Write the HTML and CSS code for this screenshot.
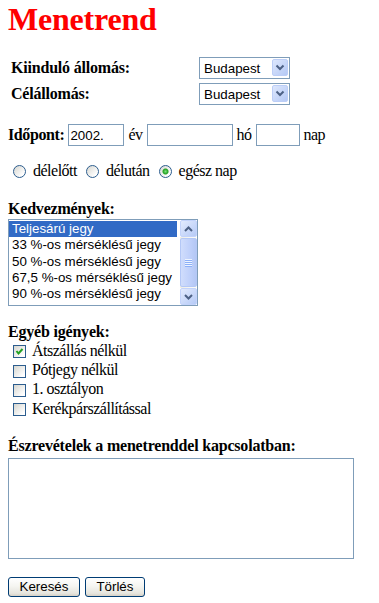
FILE: index.html
```html
<!DOCTYPE html>
<html lang="hu">
<head>
    <meta charset="UTF-8">
    <meta name="viewport" content="width=device-width, initial-scale=1.0">
    <title>Menetrend</title>
    <link rel="stylesheet" href="styles.css">
</head>
<body>
    <h1>Menetrend</h1>
    <form id="timetableForm" class="timetable">
        <div class="stations">
            <label class="field-label" for="from">Kiinduló állomás:</label>
            <span class="combo">
                <select id="from" name="from">
                    <option>Budapest</option>
                </select>
                <span class="combo-button">
                    <svg width="16" height="17" viewBox="0 0 16 17"><polyline points="4.5,6.5 8,10 11.5,6.5" fill="none" stroke="#4d6185" stroke-width="2"/></svg>
                </span>
            </span>

            <label class="field-label" for="to">Célállomás:</label>
            <span class="combo">
                <select id="to" name="to">
                    <option>Budapest</option>
                </select>
                <span class="combo-button">
                    <svg width="16" height="17" viewBox="0 0 16 17"><polyline points="4.5,6.5 8,10 11.5,6.5" fill="none" stroke="#4d6185" stroke-width="2"/></svg>
                </span>
            </span>
        </div>

        <div class="time-row">
            <label class="time-label" for="year">Időpont:</label>
            <input type="text" id="year" name="year" class="text-input year" value="2002.">
            <span class="unit">év</span>
            <input type="text" id="month" name="month" class="text-input month">
            <span class="unit">hó</span>
            <input type="text" id="day" name="day" class="text-input day">
            <span class="unit">nap</span>
        </div>

        <div class="daypart">
            <label class="opt"><input type="radio" name="daypart" value="am">délelőtt</label>
            <label class="opt"><input type="radio" name="daypart" value="pm">délután</label>
            <label class="opt"><input type="radio" name="daypart" value="all" checked>egész nap</label>
        </div>

        <div class="section-title discounts-title">Kedvezmények:</div>
        <div class="listbox">
            <ul class="options">
                <li class="selected">Teljesárú jegy</li>
                <li>33 %-os mérséklésű jegy</li>
                <li>50 %-os mérséklésű jegy</li>
                <li>67,5 %-os mérséklésű jegy</li>
                <li>90 %-os mérséklésű jegy</li>
            </ul>
            <div class="scrollbar">
                <span class="sb-btn">
                    <svg width="9" height="6" viewBox="0 0 9 6"><polyline points="1,5 4.5,1.5 8,5" fill="none" stroke="#4d6185" stroke-width="2"/></svg>
                </span>
                <span class="sb-track">
                    <span class="sb-thumb">
                        <svg width="7" height="8" viewBox="0 0 7 8">
                            <rect x="0" y="0" width="7" height="1" fill="#eef4fe"/>
                            <rect x="0" y="1" width="7" height="1" fill="#8cb0f8"/>
                            <rect x="0" y="2" width="7" height="1" fill="#eef4fe"/>
                            <rect x="0" y="3" width="7" height="1" fill="#8cb0f8"/>
                            <rect x="0" y="4" width="7" height="1" fill="#eef4fe"/>
                            <rect x="0" y="5" width="7" height="1" fill="#8cb0f8"/>
                            <rect x="0" y="6" width="7" height="1" fill="#eef4fe"/>
                            <rect x="0" y="7" width="7" height="1" fill="#8cb0f8"/>
                        </svg>
                    </span>
                </span>
                <span class="sb-btn">
                    <svg width="9" height="6" viewBox="0 0 9 6"><polyline points="1,1 4.5,4.5 8,1" fill="none" stroke="#4d6185" stroke-width="2"/></svg>
                </span>
            </div>
        </div>

        <div class="section-title extras-title">Egyéb igények:</div>
        <div class="extras">
            <label class="check">
                <span class="box"><svg width="9" height="9" viewBox="0 0 9 9"><polyline points="1.5,4 3.5,6.5 7.5,2" fill="none" stroke="#21a121" stroke-width="2"/></svg></span>
                Átszállás nélkül
            </label>
            <label class="check"><span class="box"></span>Pótjegy nélkül</label>
            <label class="check"><span class="box"></span>1. osztályon</label>
            <label class="check"><span class="box"></span>Kerékpárszállítással</label>
        </div>

        <label class="section-title notes-title" for="notes">Észrevételek a menetrenddel kapcsolatban:</label>
        <textarea id="notes" name="notes" class="notes"></textarea>

        <div class="actions">
            <button type="submit" class="btn">Keresés</button>
            <button type="reset" class="btn">Törlés</button>
        </div>
    </form>
</body>
</html>
```

FILE: styles.css
```css
body {
    font-family: "Liberation Serif", "Times New Roman", serif;
    font-size: 16px;
    color: #000;
    background-color: #fff;
    margin: 0;
    padding: 0 8px;
}
h1 {
    margin: 3px 0 0;
    font-size: 32px;
    line-height: 32px;
    color: #ff0000;
    letter-spacing: -0.2px;
}
.timetable {
    margin: 0;
}

/* station pickers */
.stations {
    display: grid;
    grid-template-columns: 188px auto;
    grid-auto-rows: 22px;
    row-gap: 4px;
    align-items: center;
    justify-content: start;
    margin-top: 22px;
    padding-left: 3px;
}
.field-label {
    font-weight: bold;
    letter-spacing: -0.2px;
    line-height: 18px;
}
.combo {
    position: relative;
    display: block;
    width: 91px;
    height: 22px;
}
.combo select {
    appearance: none;
    -webkit-appearance: none;
    display: block;
    width: 91px;
    height: 22px;
    margin: 0;
    padding: 0 0 0 4px;
    border: 1px solid #7f9db9;
    border-radius: 0;
    background-color: #fff;
    color: #000;
    font: 13.33px "Liberation Sans", Arial, sans-serif;
    outline: none;
}
.combo-button {
    position: absolute;
    top: 2px;
    right: 2px;
    width: 16px;
    height: 17px;
    box-sizing: border-box;
    border: 1px solid #bccef7;
    border-radius: 2px;
    background: linear-gradient(to bottom right, #dde7fd, #b5c9f5);
    pointer-events: none;
}
.combo-button svg {
    display: block;
    margin: -1px 0 0 -1px;
}

/* date row */
.time-row {
    display: flex;
    align-items: center;
    gap: 4px;
    height: 22px;
    margin-top: 19px;
}
.time-label {
    font-weight: bold;
    letter-spacing: -0.4px;
    line-height: 18px;
}
.unit {
    letter-spacing: -0.5px;
    line-height: 18px;
}
.text-input {
    box-sizing: border-box;
    height: 22px;
    margin: 0;
    padding: 0 1px;
    border: 1px solid #7f9db9;
    border-radius: 0;
    font: 13.33px "Liberation Sans", Arial, sans-serif;
    color: #000;
    outline: none;
}
.year {
    width: 56px;
}
.month {
    width: 86px;
}
.day {
    width: 44px;
}

/* part of the day */
.daypart {
    display: flex;
    align-items: center;
    height: 18px;
    margin-top: 16px;
    padding-left: 5px;
}
.opt {
    display: flex;
    align-items: center;
    gap: 7px;
    margin-right: 9px;
    letter-spacing: -0.5px;
    line-height: 18px;
}
.opt input {
    appearance: none;
    -webkit-appearance: none;
    width: 13px;
    height: 13px;
    margin: 0;
    border: 1px solid #2c5d8e;
    border-radius: 50%;
    background: linear-gradient(135deg, #d6d6d0, #ffffff 80%);
}
.opt input:checked {
    background: radial-gradient(circle, #7be07a 0, #21a121 2.5px, transparent 3.5px),
                linear-gradient(135deg, #d6d6d0, #ffffff 80%);
}

/* headings */
.section-title {
    display: block;
    font-weight: bold;
    letter-spacing: -0.2px;
    line-height: 18px;
}
.discounts-title {
    margin-top: 20px;
}
.extras-title {
    margin-top: 17px;
}
.notes-title {
    margin-top: 18.4px;
}

/* discounts list */
.listbox {
    display: flex;
    box-sizing: border-box;
    width: 190px;
    height: 87px;
    margin-top: 1px;
    border: 1px solid #7f9db9;
    background-color: #fff;
    font: 13.33px "Liberation Sans", Arial, sans-serif;
}
.options {
    flex: 1;
    list-style: none;
    margin: 0;
    padding: 1px 3px 0 0;
    overflow: hidden;
}
.options li {
    padding: 0 3px;
    line-height: 16.3px;
    white-space: nowrap;
}
.options li.selected {
    background-color: #316ac5;
    color: #fff;
}
.scrollbar {
    display: flex;
    flex-direction: column;
    width: 17px;
}
.sb-btn {
    display: flex;
    align-items: center;
    justify-content: center;
    box-sizing: border-box;
    height: 17px;
    border: 1px solid #c3d3fb;
    border-radius: 2px;
    background: linear-gradient(to bottom right, #e3ebfe, #b6caf6);
}
.sb-track {
    flex: 1;
    display: flex;
    padding: 1px 0;
    background: linear-gradient(to right, #eeede5, #fdfdfa);
}
.sb-thumb {
    flex: 1;
    display: flex;
    align-items: center;
    justify-content: center;
    box-sizing: border-box;
    border: 1px solid #b4c8f6;
    border-radius: 2px;
    background: linear-gradient(to right, #d0ddfc, #bfd0fa 60%, #b4c7f5);
}

/* extra options */
.extras {
    display: flex;
    flex-direction: column;
    letter-spacing: -0.5px;
}
.check {
    display: flex;
    align-items: center;
    gap: 6px;
    height: 19.4px;
    padding-left: 5px;
}
.box {
    display: flex;
    align-items: center;
    justify-content: center;
    box-sizing: border-box;
    width: 13px;
    height: 13px;
    margin-top: 2px;
    border: 1px solid #2c5d8e;
    background: linear-gradient(135deg, #d6d6d0, #ffffff 85%);
}

/* notes */
.notes {
    display: block;
    box-sizing: border-box;
    width: 346px;
    height: 101px;
    margin: 3px 0 0;
    padding: 2px;
    border: 1px solid #7f9db9;
    border-radius: 0;
    resize: none;
    font: 13.33px "Liberation Sans", Arial, sans-serif;
    outline: none;
}

/* buttons */
.actions {
    display: flex;
    gap: 5px;
    margin-top: 18px;
}
.btn {
    box-sizing: border-box;
    height: 20px;
    margin: 0;
    padding: 0 10.5px;
    border: 1px solid #003c74;
    border-radius: 3px;
    background: linear-gradient(to bottom, #ffffff 0%, #f5f5f1 45%, #e6e5de 85%, #d6d0c5 100%);
    color: #000;
    font: 13.33px "Liberation Sans", Arial, sans-serif;
    cursor: pointer;
}
```
